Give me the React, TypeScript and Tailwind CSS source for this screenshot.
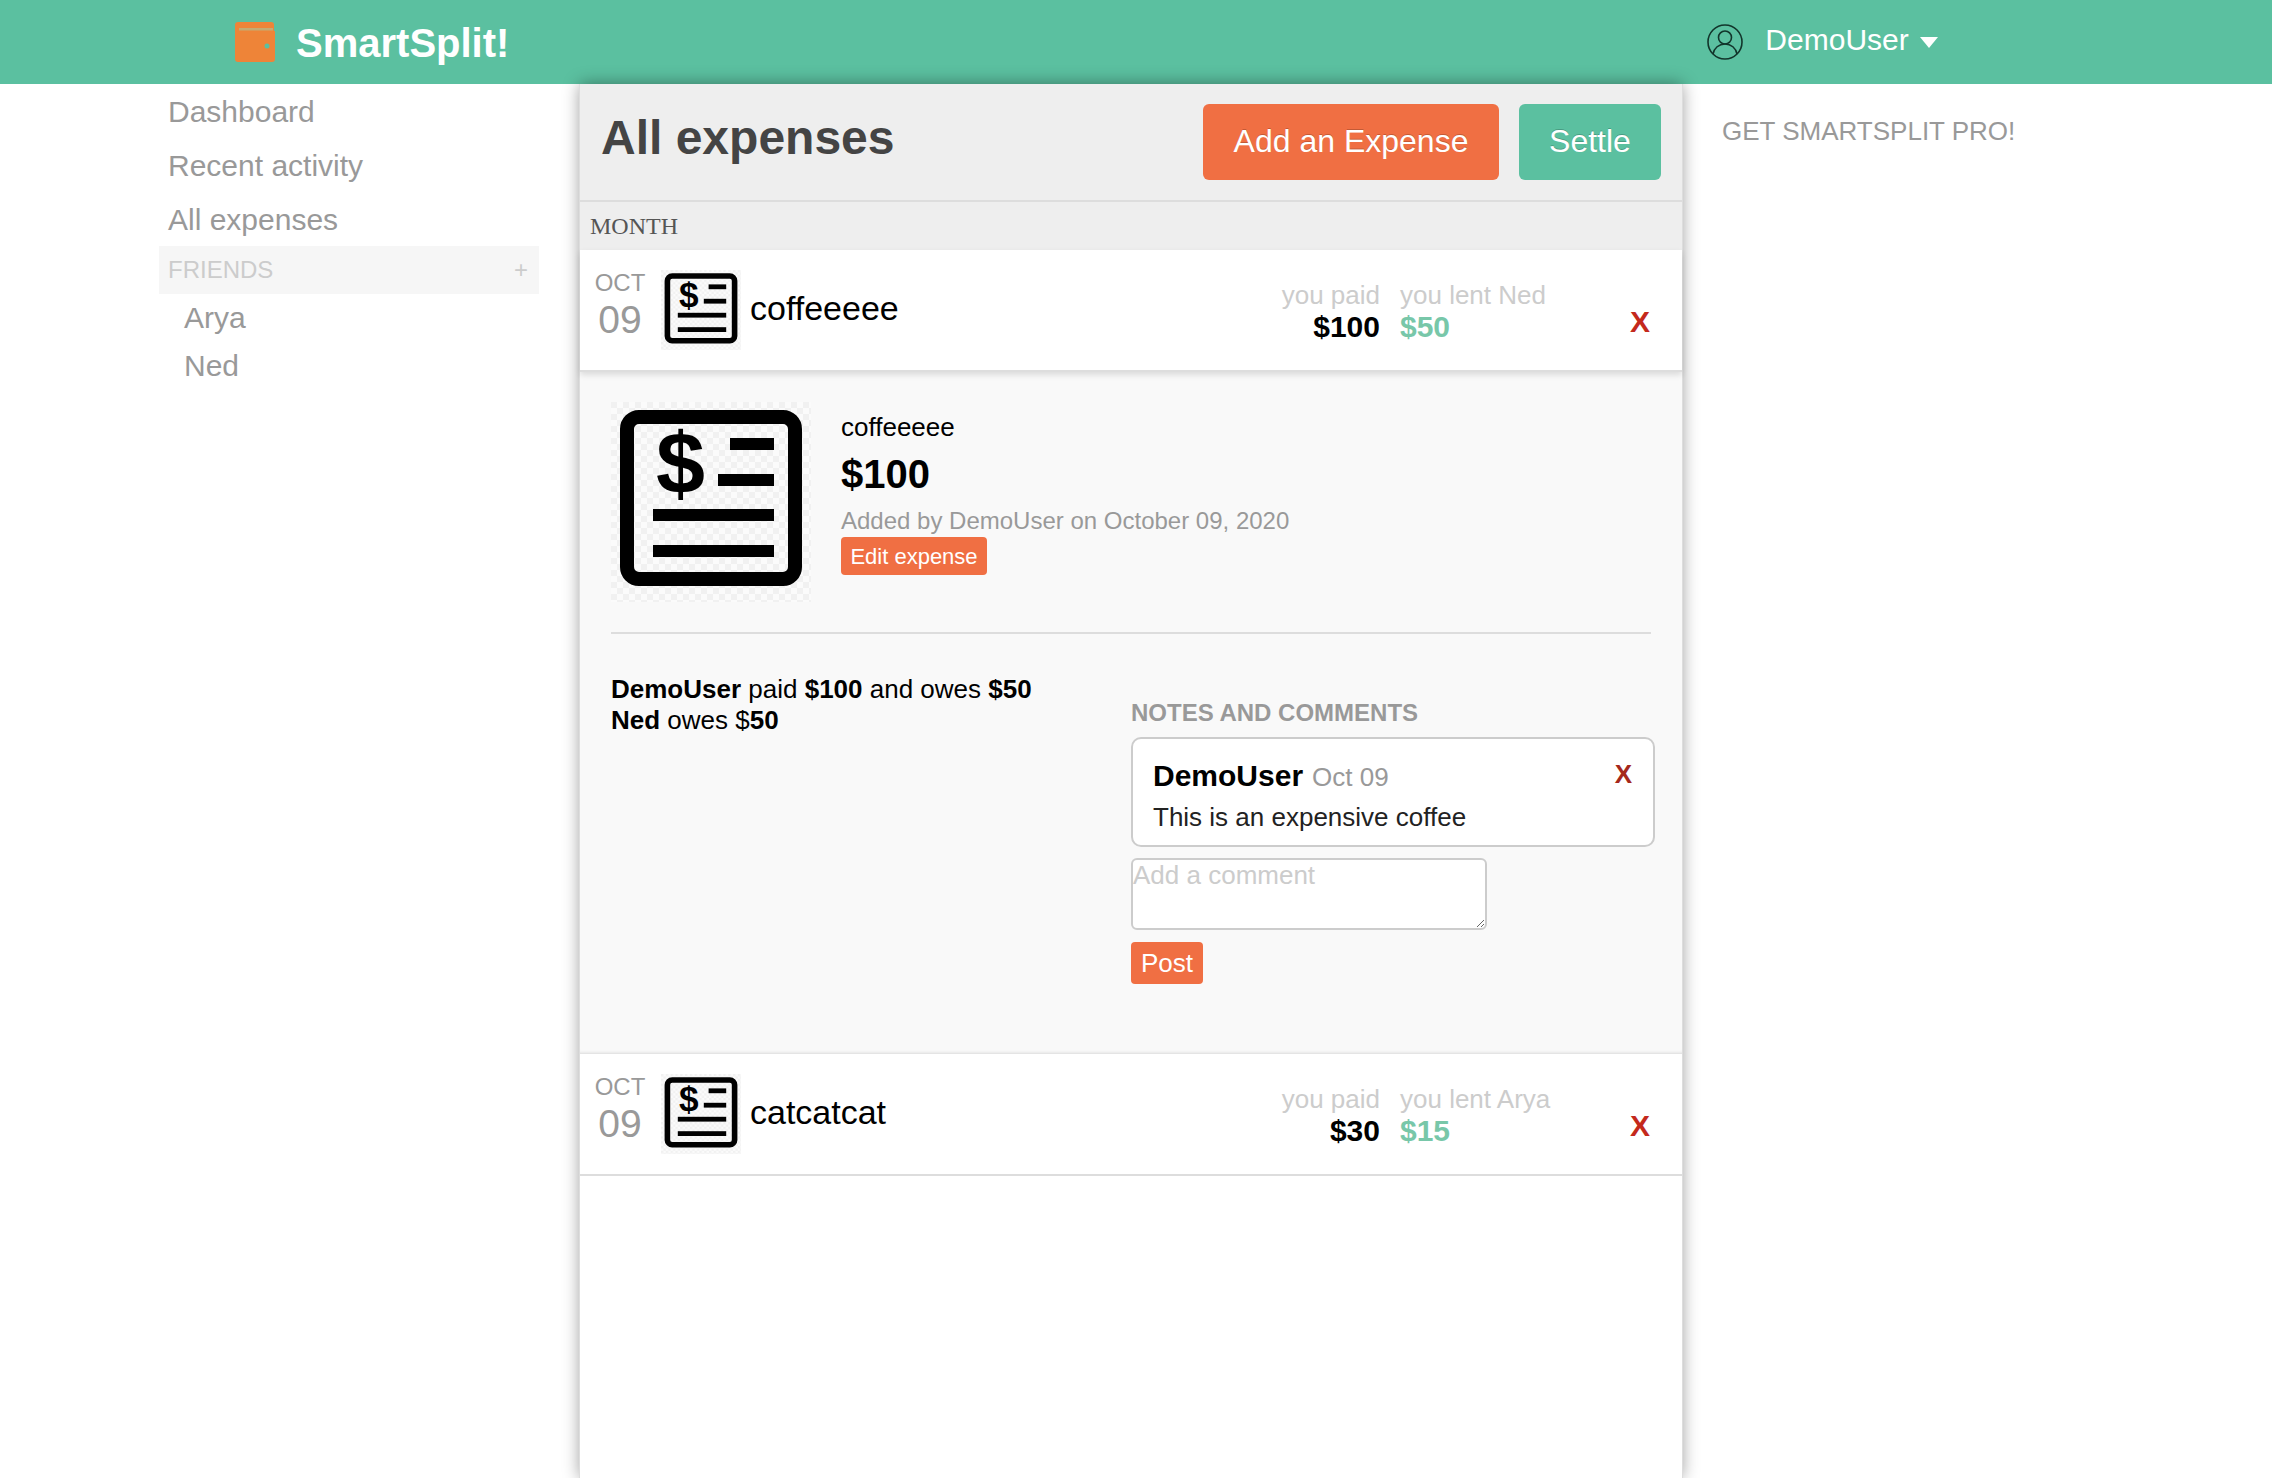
function ReceiptIcon({ className }: { className: string }) {
  return (
    <svg viewBox="0 0 200 200" className={className}>
      <defs>
        <pattern id="checks" width="12" height="12" patternUnits="userSpaceOnUse">
          <rect width="12" height="12" fill="#fbfbfb" />
          <rect width="6" height="6" fill="#f1f1f1" />
          <rect x="6" y="6" width="6" height="6" fill="#f1f1f1" />
        </pattern>
      </defs>
      <rect width="200" height="200" fill="url(#checks)" />
      <rect x="16" y="15" width="168" height="162" rx="12" fill="none" stroke="#000" strokeWidth="14" />
      <text x="45" y="92" fontFamily="Liberation Sans" fontWeight="700" fontSize="88" fill="#000">
        $
      </text>
      <rect x="119" y="36" width="44" height="12" />
      <rect x="107" y="72" width="56" height="12" />
      <rect x="42" y="107" width="121" height="12" />
      <rect x="42" y="143" width="121" height="12" />
    </svg>
  );
}

function ExpenseRow({
  title,
  paid,
  lentTo,
  lent,
  className,
}: {
  title: string;
  paid: string;
  lentTo: string;
  lent: string;
  className: string;
}) {
  return (
    <div className={`flex h-[122px] border-b-2 border-[#ddd] bg-white pl-[10px] pr-[32px] ${className}`}>
      <div className="w-[60px] pt-[19px] text-center text-[#999]">
        <div className="text-[24px] leading-[28px]">OCT</div>
        <div className="mt-[3px] text-[39px] leading-[40px]">09</div>
      </div>
      <ReceiptIcon className="ml-[11px] mt-[20px] h-[80px] w-[80px]" />
      <div className="ml-[9px] pt-[41px] text-[34px] leading-[34px] text-black">{title}</div>
      <div className="ml-auto pt-[30px] text-right">
        <div className="text-[26px] leading-[30px] text-[#ccc]">you paid</div>
        <div className="mt-[1px] text-[30px] font-bold leading-[32px] text-black">{paid}</div>
      </div>
      <div className="ml-[20px] w-[230px] pt-[30px]">
        <div className="text-[26px] leading-[30px] text-[#ccc]">you lent {lentTo}</div>
        <div className="mt-[1px] text-[30px] font-bold leading-[32px] text-[#78c7a9]">{lent}</div>
      </div>
      <div className="pt-[57px] text-[30px] font-bold leading-[30px] text-[#c4291c]">X</div>
    </div>
  );
}

export default function App() {
  return (
    <div className="flex h-[1478px] flex-col overflow-hidden bg-white font-['Liberation_Sans',Arial,sans-serif]">
      <header className="relative z-0 flex h-[84px] items-center bg-[#5bc0a0] pl-[235px] text-white">
        <svg viewBox="0 0 40 40" className="h-[40px] w-[40px]">
          <path d="M3 0h33a3 3 0 0 1 3 3v6h1v28a3 3 0 0 1-3 3H3a3 3 0 0 1-3-3V3a3 3 0 0 1 3-3z" fill="#ee8438" />
          <rect x="4" y="6" width="34" height="2.5" fill="#c4ab72" />
          <circle cx="32" cy="24" r="2.5" fill="#5bc0a0" />
        </svg>
        <div className="ml-[21px] mt-[2px] text-[40px] font-bold leading-[44px]">SmartSplit!</div>
        <svg viewBox="0 0 36 36" fill="none" stroke="#12352b" strokeWidth="1.6" className="ml-[1198px] mb-[1px] h-[36px] w-[36px]">
          <circle cx="18" cy="18" r="17" />
          <circle cx="18" cy="13.5" r="6.5" />
          <path d="M6 30c1-6 6-10 12-10s11 4 12 10" />
        </svg>
        <div className="mb-[4px] ml-[22px] text-[30px] leading-[36px]">DemoUser</div>
        <svg viewBox="0 0 18 11" className="ml-[11px] mt-[1px] h-[11px] w-[18px]" fill="#fff">
          <path d="M0 0h18L9 11z" />
        </svg>
      </header>

      <div className="flex min-h-0 flex-1">
        <nav className="w-[580px] pl-[159px] pt-[1px] text-[#999]">
          <div className="pl-[9px] text-[30px] leading-[54px]">Dashboard</div>
          <div className="pl-[9px] text-[30px] leading-[54px]">Recent activity</div>
          <div className="pl-[9px] text-[30px] leading-[53px]">All expenses</div>
          <div className="flex h-[48px] w-[380px] items-center justify-between bg-[#f6f6f6] pl-[9px] pr-[11px] text-[24px] text-[#ccc]">
            <span>FRIENDS</span>
            <span>+</span>
          </div>
          <div className="pl-[25px] text-[30px] leading-[48px]">Arya</div>
          <div className="pl-[25px] text-[30px] leading-[48px]">Ned</div>
        </nav>

        <main className="relative z-10 w-[1102px] bg-white shadow-[-1px_0_0_#ddd,1px_0_0_#ddd,0_0_16px_rgba(0,0,0,0.4)]">
          <div className="flex h-[118px] border-b-2 border-[#ddd] bg-[#eee] pl-[21px] pr-[21px] pt-[20px]">
            <h1 className="text-[48px] font-bold leading-[68px] text-[#444]">All expenses</h1>
            <button className="ml-auto h-[76px] w-[296px] rounded-[6px] bg-[#f06f43] pb-[2px] text-[32px] text-white [text-shadow:0_-1px_0_rgba(0,0,0,0.2)]">
              Add an Expense
            </button>
            <button className="ml-[20px] h-[76px] w-[142px] rounded-[6px] bg-[#5bc0a0] pb-[2px] text-[32px] text-white [text-shadow:0_-1px_0_rgba(0,0,0,0.2)]">
              Settle
            </button>
          </div>
          <div className="h-[48px] bg-[#eee] pl-[10px] font-['Liberation_Serif',serif] text-[24px] leading-[48px] text-[#555]">
            MONTH
          </div>

          <ExpenseRow title="coffeeeee" paid="$100" lentTo="Ned" lent="$50" className="relative z-10 shadow-[0_3px_6px_rgba(0,0,0,0.12)]" />

          <section className="h-[682px] bg-[#f9f9f9] pl-[31px] pr-[32px] pt-[30px] shadow-[inset_0_-4px_4px_-4px_rgba(0,0,0,0.2)]">
            <div className="flex h-[200px]">
              <ReceiptIcon className="h-[200px] w-[200px]" />
              <div className="ml-[30px] pt-[10px]">
                <div className="text-[26px] leading-[30px] text-black">coffeeeee</div>
                <div className="mt-[9px] text-[40px] font-bold leading-[46px] text-black">$100</div>
                <div className="mt-[9px] text-[24px] leading-[30px] text-[#999]">Added by DemoUser on October 09, 2020</div>
                <button className="mt-[1px] block h-[38px] w-[146px] rounded-[4px] bg-[#f06f43] text-[22px] text-white">
                  Edit expense
                </button>
              </div>
            </div>
            <div className="mt-[30px] h-[2px] w-[1040px] bg-[#ddd]" />
            <div className="flex">
              <div className="w-[520px] shrink-0 pt-[40px] text-[26px] leading-[30px] text-black">
                <div>
                  <b>DemoUser</b> paid <b>$100</b> and owes <b>$50</b>
                </div>
                <div className="mt-[1px]">
                  <b>Ned</b> owes $<b>50</b>
                </div>
              </div>
              <div className="w-[524px] shrink-0 pt-[65px]">
                <div className="text-[24px] font-bold leading-[28px] text-[#999]">NOTES AND COMMENTS</div>
                <div className="mt-[10px] rounded-[10px] border-2 border-[#ccc] bg-white pb-[13px] pl-[20px] pr-[21px] pt-[19px]">
                  <div className="flex h-[36px] justify-between">
                    <div className="h-[36px] leading-[36px]">
                      <b className="text-[30px] text-black">DemoUser</b>
                      <span className="ml-[9px] text-[26px] text-[#999]">Oct 09</span>
                    </div>
                    <span className="pt-[1px] text-[26px] font-bold leading-[30px] text-[#a5281b]">X</span>
                  </div>
                  <div className="mt-[8px] text-[26px] leading-[30px] text-[#222]">This is an expensive coffee</div>
                </div>
                <textarea
                  placeholder="Add a comment"
                  className="mt-[11px] block h-[72px] w-[356px] rounded-[6px] border-2 border-[#ccc] bg-white px-0 text-[26px] leading-[30px] placeholder:text-[#ccc]"
                />
                <button className="mt-[12px] block h-[42px] w-[72px] rounded-[4px] bg-[#f06f43] text-[26px] text-white">Post</button>
              </div>
            </div>
          </section>

          <ExpenseRow title="catcatcat" paid="$30" lentTo="Arya" lent="$15" className="" />
        </main>

        <aside className="flex-1 pl-[40px] pt-[32px] text-[26px] leading-[30px] text-[#999]">GET SMARTSPLIT PRO!</aside>
      </div>
    </div>
  );
}
